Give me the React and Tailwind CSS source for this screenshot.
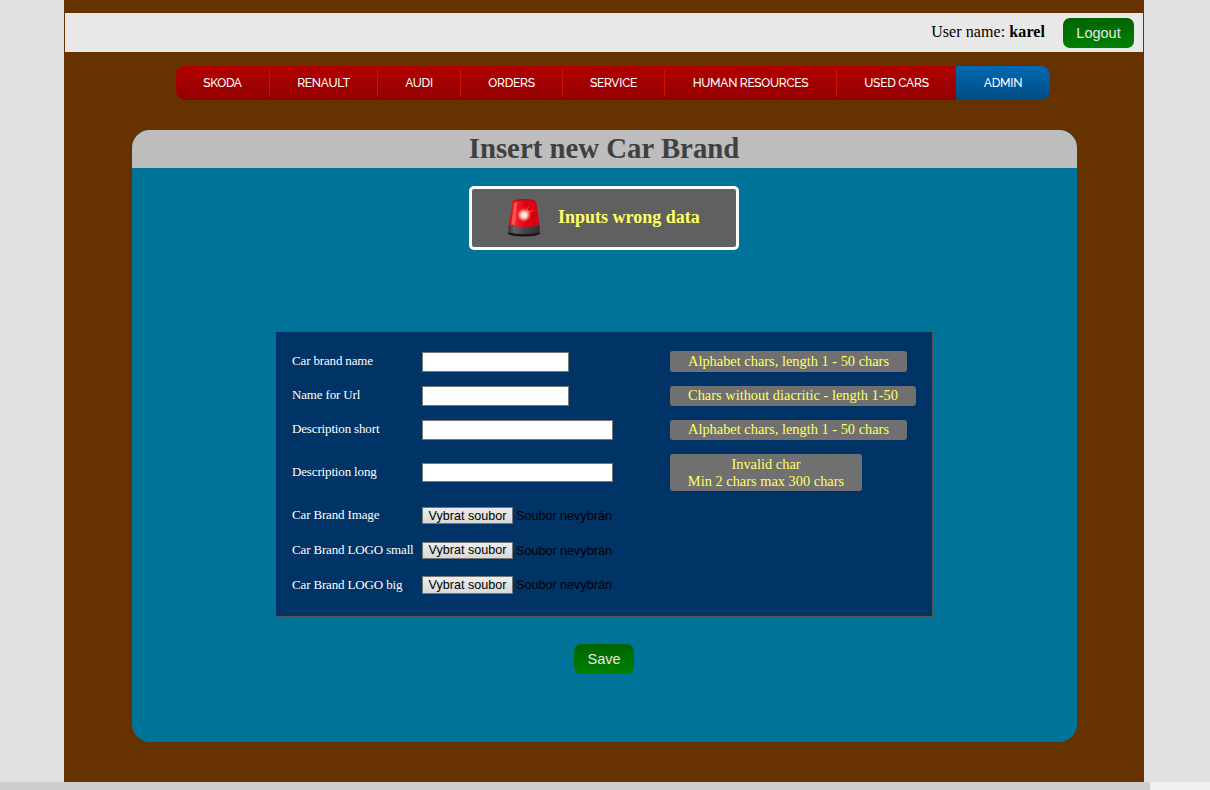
import React from "react";

const menu = [
  { label: "SKODA", box: "w-[94px]", track: "tracking-[-0.35px]" },
  { label: "RENAULT", box: "w-[108px]", track: "tracking-[-0.25px]" },
  { label: "AUDI", box: "w-[83px]", track: "tracking-[-0.25px]" },
  { label: "ORDERS", box: "w-[102px]", track: "tracking-[-0.25px]" },
  { label: "SERVICE", box: "w-[102px]", track: "tracking-[-0.25px]" },
  { label: "HUMAN RESOURCES", box: "w-[172px]", track: "tracking-[-0.3px]" },
  { label: "USED CARS", box: "w-[119px]", track: "tracking-[-0.25px]" },
];

const textRows = [
  { label: "Car brand name", row: "h-[34px]", text: "pb-[3px]", input: "h-5 w-[147px]", hint: "-mt-px h-[21px] w-[237px] pb-px", lines: ["Alphabet chars, length 1 - 50 chars"] },
  { label: "Name for Url", row: "h-[34px]", text: "pb-[3px]", input: "h-5 w-[147px]", hint: "h-5 w-[246px] pb-[2px]", lines: ["Chars without diacritic - length 1-50"] },
  { label: "Description short", row: "h-[34px]", text: "pb-[3px]", input: "h-5 w-[191px]", hint: "h-5 w-[237px] pb-[2px]", lines: ["Alphabet chars, length 1 - 50 chars"] },
  { label: "Description long", row: "h-[51px]", text: "pb-px", input: "h-[19px] w-[191px]", hint: "h-[37px] w-[192px]", lines: ["Invalid char", "Min 2 chars max 300 chars"] },
];

const fileRows = [
  { label: "Car Brand Image", row: "h-[35px]", button: "h-[17px] leading-[16px]" },
  { label: "Car Brand LOGO small", row: "h-[35px]", button: "h-[17px] leading-[15px]" },
  { label: "Car Brand LOGO big", row: "h-[34px]", button: "h-[18px] leading-[15px]" },
];

function GreenButton({ children, className }) {
  return (
    <button className={`h-[30px] rounded-[7px] bg-linear-to-b from-[#006400] to-[#008000] font-['Liberation_Sans',sans-serif] text-[14.5px] text-[#e8e8e8] ${className}`}>
      {children}
    </button>
  );
}

function Siren() {
  return (
    <svg width="34" height="38" viewBox="0 0 34 38">
      <defs>
        <linearGradient id="dome" x1="0" x2="1">
          <stop offset="0" stopColor="#c8101a" />
          <stop offset="0.2" stopColor="#f0222a" />
          <stop offset="0.55" stopColor="#e60012" />
          <stop offset="1" stopColor="#d0000e" />
        </linearGradient>
        <radialGradient id="glow">
          <stop offset="0" stopColor="#fff" />
          <stop offset="0.3" stopColor="#ffe8d8" />
          <stop offset="0.6" stopColor="#ff9a80" stopOpacity="0.8" />
          <stop offset="1" stopColor="#e60012" stopOpacity="0" />
        </radialGradient>
        <linearGradient id="base" x1="0" x2="1">
          <stop offset="0" stopColor="#343434" />
          <stop offset="0.2" stopColor="#656365" />
          <stop offset="0.5" stopColor="#484648" />
          <stop offset="1" stopColor="#302e30" />
        </linearGradient>
      </defs>
      <path d="M1.5 26 Q17 29 32.5 26 L33 34 Q31 37 17 37 Q3 37 1 34Z" fill="url(#base)" />
      <path d="M1 33.5 Q17 37 33 33.5 V34.5 Q31 37.5 17 37.5 Q3 37.5 1 34.5Z" fill="#171517" />
      <path d="M2 25.5 L5.2 3 Q6.5 .2 17 0 Q27.5 .2 29.2 3 L32.4 25.5 Q28 27.8 17 27.8 Q6 27.8 2 25.5Z" fill="url(#dome)" />
      <path d="M5.4 2.8 Q7 .2 17 0 Q27.5 .2 29 2.8 Q23 1.2 17 1.4 Q10 1.4 5.4 2.8Z" fill="#b80c14" />
      <path d="M7.3 4 L10.2 3.3 L8 26.3 L4.2 25.3Z" fill="#ff8780" opacity=".5" />
      <path d="M22 5.5 L20.5 12 L28 11 L21.5 14 L18 15Z" fill="#ffad90" opacity=".5" />
      <circle cx="17" cy="16" r="7.8" fill="url(#glow)" />
    </svg>
  );
}

function FieldLabel({ children, className }) {
  return <label className={`w-[130px] shrink-0 whitespace-nowrap text-[13px] leading-4 tracking-[-0.15px] text-white ${className}`}>{children}</label>;
}

export default function App() {
  return (
    <div className="flex h-[790px] w-[1210px] flex-col overflow-hidden bg-[#e0e0e0] font-['Liberation_Serif',serif]">
      <div className="ml-16 flex h-[782px] w-[1080px] flex-col bg-[#663300] pt-[13px]">
        <header className="mx-px flex h-[39px] shrink-0 items-center justify-end bg-[#e8e8e8] pr-[9px]">
          <p className="mr-[18px] pb-px text-base leading-5 tracking-[0.08px] text-black">User name: <b>karel</b></p>
          <GreenButton className="w-[71px] pt-0.5">Logout</GreenButton>
        </header>

        <nav className="mt-3.5 ml-28 flex h-[34px] w-[874px] shrink-0 overflow-hidden rounded-[9px] bg-linear-to-b from-[#b30000] to-[#930000] font-[Raleway,Montserrat,Lato,sans-serif] text-[12px] font-medium text-white">
          {menu.map((m, i) => (
            <a key={m.label} className={`flex h-full items-center ${m.box}`}>
              <span className={`flex-1 text-center whitespace-nowrap ${m.track}`}>{m.label}</span>
              {i < 6 && <span className="h-7 w-px bg-[#c81400]" />}
            </a>
          ))}
          <a className="flex flex-1 items-center justify-center bg-linear-to-b from-[#0069b3] to-[#004d85] tracking-[-0.2px]">ADMIN</a>
        </nav>

        <main className="mt-[30px] ml-[68px] flex h-[612px] w-[945px] shrink-0 flex-col items-center overflow-hidden rounded-[18px] bg-[#007399]">
          <h1 className="h-[38px] w-full bg-[#bdbdbd] pr-px text-center text-[28.8px] leading-[36px] font-bold text-[#404040]">Insert new Car Brand</h1>
          <div className="mt-[18px] mr-px flex h-16 w-[270px] items-center rounded-[5px] border-3 border-white bg-[#606060] pl-[35px]">
            <Siren />
            <p className="ml-[17px] pb-px text-[18px] font-bold whitespace-nowrap text-[#ffff66]">Inputs wrong data</p>
          </div>

          <form className="mt-[81px] mr-px flex h-[286px] w-[658px] flex-col border border-[#555] bg-[#003366] pt-[13px] pl-4">
            {textRows.map((r) => (
              <div key={r.label} className={`flex items-center ${r.row}`}>
                <FieldLabel className={r.text}>{r.label}</FieldLabel>
                <div className="w-[248px] shrink-0">
                  <input className={`block border border-[#767676] bg-white ${r.input}`} />
                </div>
                <div className={`flex flex-col justify-center rounded-[3px] bg-[#707070] text-center text-[14.4px] leading-[17px] whitespace-nowrap text-[#ffff66] ${r.hint}`}>
                  {r.lines.map((l) => <span key={l}>{l}</span>)}
                </div>
              </div>
            ))}
            {fileRows.map((r) => (
              <div key={r.label} className={`flex items-center ${r.row}`}>
                <FieldLabel className="pb-px">{r.label}</FieldLabel>
                <button type="button" className={`w-[91px] border border-[#767676] bg-linear-to-b from-[#eee] to-[#d8d8d8] font-['Liberation_Sans',sans-serif] text-[12.6px] whitespace-nowrap text-black ${r.button}`}>Vybrat soubor</button>
                <span className="ml-[3px] font-['Liberation_Sans',sans-serif] text-[12.6px] leading-4 whitespace-nowrap text-black">Soubor nevybrán</span>
              </div>
            ))}
          </form>
          <GreenButton className="mt-[27px] mr-px w-[60px] pt-px">Save</GreenButton>
        </main>
      </div>
      <div className="flex h-2 bg-[#f0f0f0]">
        <div className="w-[1150px] bg-[#cdcdcd]" />
      </div>
    </div>
  );
}
